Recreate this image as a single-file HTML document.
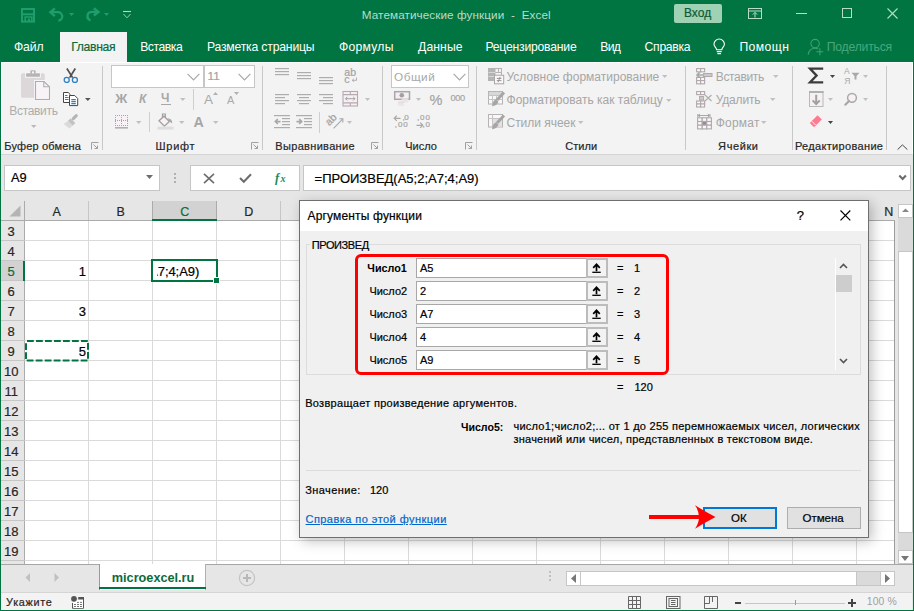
<!DOCTYPE html>
<html><head><meta charset="utf-8">
<style>
*{margin:0;padding:0;box-sizing:border-box}
html,body{width:914px;height:611px;overflow:hidden;background:#e6e6e6;font-family:"Liberation Sans",sans-serif;position:relative}
.a{position:absolute}
.t{position:absolute;white-space:nowrap;line-height:1}
svg{overflow:visible}
</style></head><body>
<div class="a" style="left:0px;top:0px;width:914px;height:62px;background:#007541"></div>
<svg class="a" style="left:21px;top:8px;" width="14" height="14" viewBox="0 0 14 14"><rect x="1" y="1" width="12" height="12.6" fill="none" stroke="#1f9d6c" stroke-width="2"/><rect x="1" y="5.3" width="12" height="2" fill="#1f9d6c"/><path d="M4.2 13.6 V9 H10.8 V13.6" fill="none" stroke="#1f9d6c" stroke-width="1.6"/><rect x="7" y="10.5" width="2" height="3" fill="#1f9d6c"/></svg>
<svg class="a" style="left:49px;top:7px;" width="16" height="15" viewBox="0 0 16 15"><path d="M5.8 1.3 L1.4 5.2 L5.8 9.1" fill="none" stroke="#1f9d6c" stroke-width="2.4"/><path d="M2 5.2 H8.8 A4.2 4.2 0 0 1 9.3 13.6" fill="none" stroke="#1f9d6c" stroke-width="2.3"/></svg>
<svg class="a" style="left:69px;top:13px;" width="6" height="3" viewBox="0 0 6 3"><path d="M0 0 H5.2 L2.6 3 Z" fill="#1f9d6c"/></svg>
<svg class="a" style="left:84px;top:7px;" width="16" height="15" viewBox="0 0 16 15"><path d="M9.8 1.3 L14.4 4.9 L9.8 8.5" fill="none" stroke="#1f9d6c" stroke-width="2.4"/><path d="M14 4.9 H7.5 A4.3 4.3 0 0 0 6.5 13.3" fill="none" stroke="#1f9d6c" stroke-width="2.3"/></svg>
<svg class="a" style="left:104px;top:13px;" width="5" height="3" viewBox="0 0 5 3"><path d="M0 0 H5 L2.5 3 Z" fill="#1f9d6c"/></svg>
<svg class="a" style="left:122px;top:10px;" width="10" height="9" viewBox="0 0 10 9"><path d="M1 1.5 H9" stroke="#b6dcc6" stroke-width="1.1"/><path d="M1.5 4 L5 7.8 L8.5 4" fill="none" stroke="#9ccfb2" stroke-width="1"/></svg>
<div class="t" style="left:361.80px;top:9.00px;font-size:11.7px;color:#b9dcc8;font-weight:normal;letter-spacing:0.095px;">Математические функции&nbsp; -&nbsp; Excel</div>
<div class="a" style="left:674px;top:4px;width:48px;height:19px;background:#9fd2b5;border-radius:2px"></div>
<div class="t" style="left:684.00px;top:7.34px;font-size:12px;color:#0e5a33;font-weight:normal;-webkit-text-stroke:0.2px currentColor;">Вход</div>
<svg class="a" style="left:748px;top:8px;" width="14" height="11" viewBox="0 0 14 11"><rect x="0.5" y="0.5" width="13" height="10" fill="none" stroke="#b9dcc8" stroke-width="1"/><path d="M0.5 3 H13.5" stroke="#b9dcc8"/><path d="M7 9.5 V4.5 M4.8 6.6 L7 4.4 L9.2 6.6" fill="none" stroke="#b9dcc8"/></svg>
<div class="a" style="left:796px;top:13px;width:11px;height:1px;background:#b9dcc8"></div>
<div class="a" style="left:842px;top:8px;width:10px;height:10px;border:1px solid #b9dcc8"></div>
<svg class="a" style="left:887px;top:8px;" width="11" height="11" viewBox="0 0 11 11"><path d="M0.5 0.5 L10.5 10.5 M10.5 0.5 L0.5 10.5" stroke="#b9dcc8" stroke-width="1.1"/></svg>
<div class="a" style="left:60px;top:32px;width:67px;height:31px;background:#f3f3f3"></div>
<div class="t" style="left:13.90px;top:40.67px;font-size:12.2px;color:#fff;font-weight:normal;letter-spacing:-0.122px;">Файл</div>
<div class="t" style="left:71.20px;top:40.67px;font-size:12.2px;color:#0d6b3a;font-weight:normal;letter-spacing:-0.315px;-webkit-text-stroke:0.2px currentColor;">Главная</div>
<div class="t" style="left:140.20px;top:40.67px;font-size:12.2px;color:#fff;font-weight:normal;letter-spacing:-0.467px;">Вставка</div>
<div class="t" style="left:206.90px;top:40.67px;font-size:12.2px;color:#fff;font-weight:normal;letter-spacing:-0.179px;">Разметка страницы</div>
<div class="t" style="left:339.10px;top:40.67px;font-size:12.2px;color:#fff;font-weight:normal;letter-spacing:0.211px;">Формулы</div>
<div class="t" style="left:418.10px;top:40.67px;font-size:12.2px;color:#fff;font-weight:normal;letter-spacing:0.073px;">Данные</div>
<div class="t" style="left:485.40px;top:40.67px;font-size:12.2px;color:#fff;font-weight:normal;letter-spacing:-0.216px;">Рецензирование</div>
<div class="t" style="left:600.20px;top:40.67px;font-size:12.2px;color:#fff;font-weight:normal;letter-spacing:-0.625px;">Вид</div>
<div class="t" style="left:644.60px;top:40.67px;font-size:12.2px;color:#fff;font-weight:normal;letter-spacing:-0.302px;">Справка</div>
<div class="t" style="left:739.40px;top:40.67px;font-size:12.2px;color:#fff;font-weight:normal;letter-spacing:0.429px;">Помощн</div>
<div class="t" style="left:826.70px;top:40.67px;font-size:12.2px;color:#4aa77c;font-weight:normal;letter-spacing:-0.200px;">Поделиться</div>
<svg class="a" style="left:713px;top:39px;" width="13" height="17" viewBox="0 0 13 17"><path d="M3.6 10.8 C3.4 8.6 1 7.6 1 5.2 A5.2 5.2 0 0 1 11.4 5.2 C11.4 7.6 9 8.6 8.8 10.8 Z" fill="none" stroke="#fff" stroke-width="1.1"/><path d="M3.8 12.6 H8.6 M4.4 14.6 H8" stroke="#fff" stroke-width="1.1"/></svg>
<svg class="a" style="left:807px;top:38px;" width="17" height="18" viewBox="0 0 17 18"><circle cx="8.1" cy="5.6" r="4.2" fill="none" stroke="#3f9f72" stroke-width="1.1"/><path d="M1.2 16.6 C1.8 12.4 4.6 10.2 8.1 10.2 C9.4 10.2 10.4 10.5 11.3 11" fill="none" stroke="#3f9f72" stroke-width="1.1"/><path d="M12.9 10.3 V17.3 M9.4 13.8 H16.4" stroke="#3f9f72" stroke-width="1.1"/></svg>
<div class="a" style="left:1px;top:62px;width:912px;height:92px;background:#f3f3f3;border-left:1px solid #fff;border-top:1px solid #fff;border-right:1px solid #fff"></div>
<div class="a" style="left:1px;top:154px;width:911px;height:1px;background:#d5d5d5"></div>
<div class="a" style="left:102px;top:66px;width:1px;height:84px;background:#c8c8c8"></div>
<div class="a" style="left:262px;top:66px;width:1px;height:84px;background:#c8c8c8"></div>
<div class="a" style="left:382px;top:66px;width:1px;height:84px;background:#c8c8c8"></div>
<div class="a" style="left:476px;top:66px;width:1px;height:84px;background:#c8c8c8"></div>
<div class="a" style="left:685px;top:66px;width:1px;height:84px;background:#c8c8c8"></div>
<div class="a" style="left:792px;top:66px;width:1px;height:84px;background:#c8c8c8"></div>
<div class="a" style="left:886px;top:66px;width:1px;height:84px;background:#c8c8c8"></div>
<div class="t" style="left:4.30px;top:141.19px;font-size:11px;color:#262626;font-weight:normal;letter-spacing:0.168px;-webkit-text-stroke:0.2px currentColor;">Буфер обмена</div>
<div class="t" style="left:155.60px;top:141.19px;font-size:11px;color:#262626;font-weight:normal;letter-spacing:0.675px;-webkit-text-stroke:0.2px currentColor;">Шрифт</div>
<div class="t" style="left:275.30px;top:141.19px;font-size:11px;color:#262626;font-weight:normal;letter-spacing:0.325px;-webkit-text-stroke:0.2px currentColor;">Выравнивание</div>
<div class="t" style="left:405.30px;top:141.19px;font-size:11px;color:#262626;font-weight:normal;letter-spacing:-0.011px;-webkit-text-stroke:0.2px currentColor;">Число</div>
<div class="t" style="left:565.20px;top:141.19px;font-size:11px;color:#262626;font-weight:normal;letter-spacing:0.050px;-webkit-text-stroke:0.2px currentColor;">Стили</div>
<div class="t" style="left:718.10px;top:141.19px;font-size:11px;color:#262626;font-weight:normal;letter-spacing:0.599px;-webkit-text-stroke:0.2px currentColor;">Ячейки</div>
<div class="t" style="left:794.90px;top:141.19px;font-size:11px;color:#262626;font-weight:normal;letter-spacing:0.330px;-webkit-text-stroke:0.2px currentColor;">Редактирование</div>
<svg class="a" style="left:91px;top:142px;" width="8" height="8" viewBox="0 0 8 8"><path d="M0.5 7.5 V0.5 H7.5" fill="none" stroke="#a0a0a0"/><path d="M2.5 2.5 L6.5 6.5 M3.5 6.5 H6.5 V3.5" fill="none" stroke="#a0a0a0"/></svg>
<svg class="a" style="left:251px;top:142px;" width="8" height="8" viewBox="0 0 8 8"><path d="M0.5 7.5 V0.5 H7.5" fill="none" stroke="#a0a0a0"/><path d="M2.5 2.5 L6.5 6.5 M3.5 6.5 H6.5 V3.5" fill="none" stroke="#a0a0a0"/></svg>
<svg class="a" style="left:371px;top:142px;" width="8" height="8" viewBox="0 0 8 8"><path d="M0.5 7.5 V0.5 H7.5" fill="none" stroke="#a0a0a0"/><path d="M2.5 2.5 L6.5 6.5 M3.5 6.5 H6.5 V3.5" fill="none" stroke="#a0a0a0"/></svg>
<svg class="a" style="left:465px;top:142px;" width="8" height="8" viewBox="0 0 8 8"><path d="M0.5 7.5 V0.5 H7.5" fill="none" stroke="#a0a0a0"/><path d="M2.5 2.5 L6.5 6.5 M3.5 6.5 H6.5 V3.5" fill="none" stroke="#a0a0a0"/></svg>
<svg class="a" style="left:20px;top:69px;" width="30" height="32" viewBox="0 0 30 32"><rect x="1" y="4.2" width="23.8" height="24.5" rx="1.5" fill="#dcd8da"/><rect x="5.1" y="3.2" width="15.8" height="5.6" fill="#f6f6f6"/><rect x="6.1" y="4.2" width="13.8" height="3.6" rx="0.6" fill="#b8b4b6"/><rect x="10.4" y="1.2" width="5.2" height="3.5" rx="1" fill="#b8b4b6"/><rect x="12" y="2.4" width="2" height="2" fill="#f6f6f6"/><path d="M15.5 12.5 H24 L29.5 17.8 V30.5 H15.5 Z" fill="none" stroke="#f6f6f6" stroke-width="3"/><path d="M15.5 12.5 H24 L29.5 17.8 V30.5 H15.5 Z" fill="#f8f3f6" stroke="#b0acae" stroke-width="1.1"/><path d="M23.8 12.5 V17.8 H29.5" fill="none" stroke="#b0acae" stroke-width="1.1"/></svg>
<div class="t" style="left:9.30px;top:104.74px;font-size:12px;color:#adadad;font-weight:normal;letter-spacing:-0.326px;">Вставить</div>
<svg class="a" style="left:31px;top:125px;" width="6" height="3" viewBox="0 0 6 3"><path d="M0 0 H5.5 L2.75 3 Z" fill="#b9b9b9"/></svg>
<svg class="a" style="left:63px;top:67px;" width="16" height="16" viewBox="0 0 16 16"><path d="M3.9 1.5 L9.6 10.6 M12.3 1.5 L6.6 10.6" stroke="#505050" stroke-width="1.7"/><circle cx="3.7" cy="12.9" r="2.5" fill="none" stroke="#2e7fc1" stroke-width="1.3"/><circle cx="11.9" cy="12.9" r="2.5" fill="none" stroke="#2e7fc1" stroke-width="1.3"/></svg>
<svg class="a" style="left:63px;top:92px;" width="16" height="15" viewBox="0 0 16 15"><path d="M0.5 0.5 H5.2 L7 2.3 V10.5 H0.5 Z" fill="#fff" stroke="#454545"/><path d="M2 3.5 H4.5 M2 5.5 H5.5 M2 7.5 H5.5" stroke="#2e7fc1"/><path d="M6.5 3.5 H11.7 L14.7 6.5 V13.6 H6.5 Z" fill="#fff" stroke="#454545"/><path d="M8.3 7.6 H12.8 M8.3 9.6 H12.8 M8.3 11.6 H12.8" stroke="#2e7fc1" stroke-width="1.1"/></svg>
<svg class="a" style="left:85px;top:98px;" width="6" height="3" viewBox="0 0 6 3"><path d="M0 0 H5.6 L2.8 3 Z" fill="#555"/></svg>
<svg class="a" style="left:63px;top:114px;" width="17" height="15" viewBox="0 0 17 15"><path d="M13.3 1.6 L10.3 4.6" stroke="#b4b4b4" stroke-width="3" stroke-linecap="round"/><path d="M7.6 4.3 L12.3 9 L9.6 11.7 L4.9 7 Z" fill="#c2c2c2"/><path d="M4.9 7 L9.6 11.7 L6.4 14.6 L0.6 10 Z" fill="#dadada"/></svg>
<div class="a" style="left:111px;top:65px;width:93px;height:23px;background:#fff;border:1px solid #c6c6c6"></div>
<div class="a" style="left:204px;top:65px;width:51px;height:23px;background:#fff;border:1px solid #c6c6c6"></div>
<svg class="a" style="left:187px;top:73px;" width="13" height="8" viewBox="0 0 13 8"><path d="M0.6 0.8 L6.5 6.8 L12.4 0.8" fill="none" stroke="#a8a8a8" stroke-width="1.2"/></svg>
<svg class="a" style="left:238px;top:73px;" width="13" height="8" viewBox="0 0 13 8"><path d="M0.6 0.8 L6.5 6.8 L12.4 0.8" fill="none" stroke="#a8a8a8" stroke-width="1.2"/></svg>
<div class="t" style="left:207.50px;top:71.21px;font-size:11.8px;color:#a4a4a4;font-weight:normal;-webkit-text-stroke:0.2px currentColor;">11</div>
<div class="t" style="left:115.30px;top:91.74px;font-size:13.3px;color:#a6a6a6;font-weight:bold;">Ж</div>
<div class="t" style="left:139.00px;top:92.84px;font-size:12px;color:#a8a8a8;font-weight:bold;font-style:italic">К</div>
<div class="t" style="left:161.00px;top:92.34px;font-size:12px;color:#a8a8a8;font-weight:bold;">Ч</div>
<div class="a" style="left:161px;top:104px;width:10px;height:1px;background:#a8a8a8"></div>
<svg class="a" style="left:180px;top:98px;" width="6" height="3" viewBox="0 0 6 3"><path d="M0 0 H5.5 L2.75 3 Z" fill="#c0c0c0"/></svg>
<div class="a" style="left:193px;top:89px;width:1px;height:21px;background:#cfcfcf"></div>
<div class="t" style="left:204.00px;top:93.17px;font-size:13.5px;color:#a8a8a8;font-weight:normal;">A</div>
<svg class="a" style="left:213px;top:92px;" width="5" height="3" viewBox="0 0 5 3"><path d="M0 3 H5 L2.5 0 Z" fill="#b0b0b0"/></svg>
<div class="t" style="left:227.00px;top:95.29px;font-size:11px;color:#a8a8a8;font-weight:normal;">A</div>
<svg class="a" style="left:234px;top:92px;" width="5" height="3" viewBox="0 0 5 3"><path d="M0 0 H5 L2.5 3 Z" fill="#b0b0b0"/></svg>
<svg class="a" style="left:115px;top:115px;" width="14" height="14" viewBox="0 0 14 14"><rect x="0" y="0" width="13" height="11" fill="#f8f2f6"/><rect x="0" y="0" width="1" height="1" fill="#aaa2aa"/><rect x="0" y="5" width="1" height="1" fill="#aaa2aa"/><rect x="0" y="10" width="1" height="1" fill="#aaa2aa"/><rect x="2" y="0" width="1" height="1" fill="#aaa2aa"/><rect x="2" y="5" width="1" height="1" fill="#aaa2aa"/><rect x="2" y="10" width="1" height="1" fill="#aaa2aa"/><rect x="4" y="0" width="1" height="1" fill="#aaa2aa"/><rect x="4" y="5" width="1" height="1" fill="#aaa2aa"/><rect x="4" y="10" width="1" height="1" fill="#aaa2aa"/><rect x="6" y="0" width="1" height="1" fill="#aaa2aa"/><rect x="6" y="5" width="1" height="1" fill="#aaa2aa"/><rect x="6" y="10" width="1" height="1" fill="#aaa2aa"/><rect x="8" y="0" width="1" height="1" fill="#aaa2aa"/><rect x="8" y="5" width="1" height="1" fill="#aaa2aa"/><rect x="8" y="10" width="1" height="1" fill="#aaa2aa"/><rect x="10" y="0" width="1" height="1" fill="#aaa2aa"/><rect x="10" y="5" width="1" height="1" fill="#aaa2aa"/><rect x="10" y="10" width="1" height="1" fill="#aaa2aa"/><rect x="12" y="0" width="1" height="1" fill="#aaa2aa"/><rect x="12" y="5" width="1" height="1" fill="#aaa2aa"/><rect x="12" y="10" width="1" height="1" fill="#aaa2aa"/><rect x="0" y="0" width="1" height="1" fill="#aaa2aa"/><rect x="6" y="0" width="1" height="1" fill="#aaa2aa"/><rect x="12" y="0" width="1" height="1" fill="#aaa2aa"/><rect x="0" y="2" width="1" height="1" fill="#aaa2aa"/><rect x="6" y="2" width="1" height="1" fill="#aaa2aa"/><rect x="12" y="2" width="1" height="1" fill="#aaa2aa"/><rect x="0" y="4" width="1" height="1" fill="#aaa2aa"/><rect x="6" y="4" width="1" height="1" fill="#aaa2aa"/><rect x="12" y="4" width="1" height="1" fill="#aaa2aa"/><rect x="0" y="6" width="1" height="1" fill="#aaa2aa"/><rect x="6" y="6" width="1" height="1" fill="#aaa2aa"/><rect x="12" y="6" width="1" height="1" fill="#aaa2aa"/><rect x="0" y="8" width="1" height="1" fill="#aaa2aa"/><rect x="6" y="8" width="1" height="1" fill="#aaa2aa"/><rect x="12" y="8" width="1" height="1" fill="#aaa2aa"/><rect x="0" y="10" width="1" height="1" fill="#aaa2aa"/><rect x="6" y="10" width="1" height="1" fill="#aaa2aa"/><rect x="12" y="10" width="1" height="1" fill="#aaa2aa"/><rect x="0" y="12" width="13" height="1.6" fill="#b0b0b0"/></svg>
<svg class="a" style="left:136px;top:121px;" width="6" height="3" viewBox="0 0 6 3"><path d="M0 0 H5.5 L2.75 3 Z" fill="#c0c0c0"/></svg>
<div class="a" style="left:149px;top:112px;width:1px;height:20px;background:#cfcfcf"></div>
<svg class="a" style="left:157px;top:113px;" width="17" height="17" viewBox="0 0 17 17"><path d="M2 7.8 L7 3.2 L12.4 8.6 L7.4 13.2 Z" fill="#f8f0f4" stroke="#a0a0a0" stroke-width="1.3"/><path d="M5.5 4.8 V1 H8.3 V4.5" fill="none" stroke="#a0a0a0" stroke-width="1.2"/><path d="M10.5 5.2 Q15.5 5.5 15.2 10.5 L12.6 8.4 Z" fill="#a8a8a8"/><rect x="0.5" y="13.6" width="16" height="3" fill="#dedede"/></svg>
<svg class="a" style="left:179px;top:121px;" width="6" height="3" viewBox="0 0 6 3"><path d="M0 0 H5.5 L2.75 3 Z" fill="#c0c0c0"/></svg>
<div class="t" style="left:193.60px;top:114.80px;font-size:14.3px;color:#a6a6a6;font-weight:bold;">A</div>
<svg class="a" style="left:213px;top:121px;" width="6" height="3" viewBox="0 0 6 3"><path d="M0 0 H5.5 L2.75 3 Z" fill="#c0c0c0"/></svg>
<svg class="a" style="left:0px;top:0px;left:0;top:0" width="914" height="200" viewBox="0 0 914 200"><rect x="275" y="68" width="14" height="1.2" fill="#adadad"/><rect x="275" y="71" width="14" height="1.2" fill="#adadad"/><rect x="275" y="74" width="14" height="1.2" fill="#adadad"/><rect x="297" y="72" width="14" height="1.2" fill="#adadad"/><rect x="297" y="75" width="14" height="1.2" fill="#adadad"/><rect x="297" y="78" width="14" height="1.2" fill="#adadad"/><rect x="319" y="77" width="14" height="1.2" fill="#adadad"/><rect x="319" y="80" width="14" height="1.2" fill="#adadad"/><rect x="319" y="83" width="14" height="1.2" fill="#adadad"/><rect x="275" y="94" width="14" height="1.2" fill="#adadad"/><rect x="297" y="94" width="14" height="1.2" fill="#adadad"/><rect x="319" y="94" width="14" height="1.2" fill="#adadad"/><rect x="275" y="97" width="10" height="1.2" fill="#adadad"/><rect x="299" y="97" width="10" height="1.2" fill="#adadad"/><rect x="323" y="97" width="10" height="1.2" fill="#adadad"/><rect x="275" y="100" width="14" height="1.2" fill="#adadad"/><rect x="297" y="100" width="14" height="1.2" fill="#adadad"/><rect x="319" y="100" width="14" height="1.2" fill="#adadad"/><rect x="275" y="103" width="10" height="1.2" fill="#adadad"/><rect x="299" y="103" width="10" height="1.2" fill="#adadad"/><rect x="323" y="103" width="10" height="1.2" fill="#adadad"/><rect x="274" y="115" width="16" height="1.2" fill="#adadad"/><rect x="296" y="115" width="16" height="1.2" fill="#adadad"/><rect x="282" y="118" width="8" height="1.2" fill="#adadad"/><rect x="304" y="118" width="8" height="1.2" fill="#adadad"/><rect x="282" y="121" width="8" height="1.2" fill="#adadad"/><rect x="304" y="121" width="8" height="1.2" fill="#adadad"/><rect x="282" y="124" width="8" height="1.2" fill="#adadad"/><rect x="304" y="124" width="8" height="1.2" fill="#adadad"/><rect x="274" y="127" width="16" height="1.2" fill="#adadad"/><rect x="296" y="127" width="16" height="1.2" fill="#adadad"/><path d="M280.5 121.6 H275.5 M277.8 119.2 L275.3 121.6 L277.8 124" fill="none" stroke="#a8a8a8" stroke-width="1.6"/><path d="M296.5 121.6 H301.5 M299.2 119.2 L301.7 121.6 L299.2 124" fill="none" stroke="#a8a8a8" stroke-width="1.6"/></svg>
<div class="t" style="left:344.30px;top:67.01px;font-size:10.5px;color:#a2a2a2;font-weight:normal;-webkit-text-stroke:0.2px currentColor;">ab</div>
<div class="t" style="left:344.30px;top:73.91px;font-size:10.5px;color:#a2a2a2;font-weight:normal;-webkit-text-stroke:0.2px currentColor;">c</div>
<svg class="a" style="left:351px;top:77px;" width="7" height="6" viewBox="0 0 7 6"><path d="M5.5 0.5 V3.3 H1.2 M2.8 1.8 L1.2 3.3 L2.8 4.8" fill="none" stroke="#a8a8a8" stroke-width="0.9"/></svg>
<svg class="a" style="left:342px;top:91px;" width="16" height="15" viewBox="0 0 16 15"><rect x="1" y="0.5" width="14.5" height="14.5" fill="#f6eff3" stroke="#b4aab0" stroke-width="1.1"/><path d="M1 3.6 H15.5 M1 11.9 H15.5 M8.3 0.5 V3.6 M8.3 11.9 V15" stroke="#b4aab0" stroke-width="1.1"/><path d="M3.5 7.7 H13 M5.3 5.9 L3.5 7.7 L5.3 9.5 M11.2 5.9 L13 7.7 L11.2 9.5" fill="none" stroke="#a0a0a0" stroke-width="1"/></svg>
<svg class="a" style="left:365px;top:98px;" width="5" height="3" viewBox="0 0 5 3"><path d="M0 0 H5 L2.5 3 Z" fill="#c0c0c0"/></svg>
<div class="a" style="left:319px;top:112px;width:1px;height:21px;background:#cfcfcf"></div>
<svg class="a" style="left:326px;top:113px;" width="19" height="17" viewBox="0 0 19 17"><text x="0" y="0" font-size="10.5" fill="#a4a4a4" stroke="#a4a4a4" stroke-width="0.25" font-family="Liberation Sans" transform="translate(3.2 13.2) rotate(-45)">ab</text><path d="M7.6 15.4 L16.6 6.2" stroke="#a8a8a8" stroke-width="1.1"/><path d="M13.4 5.8 L16.9 5.9 L16.8 9.4" fill="none" stroke="#a8a8a8" stroke-width="1.1"/></svg>
<svg class="a" style="left:347px;top:121px;" width="5" height="3" viewBox="0 0 5 3"><path d="M0 0 H5 L2.5 3 Z" fill="#c0c0c0"/></svg>
<div class="a" style="left:391px;top:65px;width:78px;height:23px;background:#fff;border:1px solid #c6c6c6"></div>
<div class="t" style="left:394.00px;top:72.01px;font-size:11.8px;color:#a8a8a8;font-weight:normal;letter-spacing:0.486px;">Общий</div>
<svg class="a" style="left:453px;top:73px;" width="13" height="8" viewBox="0 0 13 8"><path d="M0.6 0.8 L6.5 6.8 L12.4 0.8" fill="none" stroke="#a8a8a8" stroke-width="1.2"/></svg>
<svg class="a" style="left:393px;top:90px;" width="18" height="17" viewBox="0 0 18 17"><rect x="1.7" y="1.7" width="14.8" height="7.6" fill="#f6eef2" stroke="#a8a8a8" stroke-width="1.5"/><circle cx="8.8" cy="5.3" r="2.3" fill="#a0a0a0"/><ellipse cx="12" cy="9.2" rx="3.6" ry="1.3" fill="#e4dce0"/><ellipse cx="12" cy="11.6" rx="3.6" ry="1.1" fill="#ece4e8"/><ellipse cx="8" cy="12.6" rx="3.4" ry="1.2" fill="#e4dce0"/><ellipse cx="8" cy="15" rx="3.4" ry="1.1" fill="#ece4e8"/></svg>
<svg class="a" style="left:416px;top:98px;" width="5" height="3" viewBox="0 0 5 3"><path d="M0 0 H5 L2.5 3 Z" fill="#c0c0c0"/></svg>
<div class="t" style="left:429.60px;top:92.83px;font-size:14.5px;color:#a4a4a4;font-weight:normal;-webkit-text-stroke:0.2px currentColor;">%</div>
<div class="t" style="left:450.40px;top:94.41px;font-size:9.2px;color:#a4a4a4;font-weight:normal;letter-spacing:-0.250px;-webkit-text-stroke:0.2px currentColor;">000</div>
<svg class="a" style="left:393px;top:115px;" width="8" height="7" viewBox="0 0 8 7"><path d="M7.5 3.3 H1.2 M3.8 0.7 L1.2 3.3 L3.8 5.9" fill="none" stroke="#a8a8a8" stroke-width="1.2"/></svg>
<div class="t" style="left:402.60px;top:113.83px;font-size:8px;color:#a4a4a4;font-weight:normal;letter-spacing:-0.552px;-webkit-text-stroke:0.2px currentColor;">,0</div>
<div class="t" style="left:394.80px;top:121.03px;font-size:8px;color:#a4a4a4;font-weight:normal;letter-spacing:0.899px;-webkit-text-stroke:0.2px currentColor;">,00</div>
<div class="t" style="left:417.00px;top:113.83px;font-size:8px;color:#a4a4a4;font-weight:normal;letter-spacing:0.899px;-webkit-text-stroke:0.2px currentColor;">,00</div>
<svg class="a" style="left:416px;top:122px;" width="8" height="7" viewBox="0 0 8 7"><path d="M0.5 3.3 H6.8 M4.2 0.7 L6.8 3.3 L4.2 5.9" fill="none" stroke="#a8a8a8" stroke-width="1.2"/></svg>
<div class="t" style="left:422.60px;top:121.03px;font-size:8px;color:#a4a4a4;font-weight:normal;letter-spacing:0.748px;-webkit-text-stroke:0.2px currentColor;">,0</div>
<div class="t" style="left:506.50px;top:71.04px;font-size:12px;color:#a6a6a6;font-weight:normal;letter-spacing:0.005px;">Условное форматирование</div>
<svg class="a" style="left:662px;top:75.2px;" width="6" height="3" viewBox="0 0 6 3"><path d="M0 0 H5.5 L2.75 3 Z" fill="#c0c0c0"/></svg>
<div class="t" style="left:506.50px;top:94.34px;font-size:12px;color:#a6a6a6;font-weight:normal;letter-spacing:0.006px;">Форматировать как таблицу</div>
<svg class="a" style="left:666px;top:98.5px;" width="6" height="3" viewBox="0 0 6 3"><path d="M0 0 H5.5 L2.75 3 Z" fill="#c0c0c0"/></svg>
<div class="t" style="left:506.50px;top:116.74px;font-size:12px;color:#a6a6a6;font-weight:normal;letter-spacing:-0.027px;">Стили ячеек</div>
<svg class="a" style="left:578px;top:120.9px;" width="6" height="3" viewBox="0 0 6 3"><path d="M0 0 H5.5 L2.75 3 Z" fill="#c0c0c0"/></svg>
<svg class="a" style="left:488px;top:68px;" width="17" height="16" viewBox="0 0 17 16"><rect x="0.5" y="0.5" width="13" height="12" fill="#f6f2f4" stroke="#b4b4b4"/><rect x="0" y="0" width="7.5" height="13" fill="#b4b4b4"/><path d="M0.5 4.5 H7 M0.5 8.5 H7" stroke="#d6d6d6"/><path d="M7.5 4.5 H13.5 M10.5 0.5 V4.5" stroke="#b4b4b4"/><rect x="6.5" y="7.2" width="9.2" height="8.6" fill="#fbf6f9" stroke="#a8a8a8"/><path d="M8.8 10.4 H13.4 M8.8 12.6 H13.4 M12.2 8.8 L10 14.2" stroke="#8c8c8c" stroke-width="0.9"/></svg>
<svg class="a" style="left:488px;top:91px;" width="17" height="16" viewBox="0 0 17 16"><rect x="0.5" y="0.5" width="14" height="12.5" fill="#fbf6f9" stroke="#b4b4b4"/><path d="M0.5 4.5 H14.5 M0.5 8.5 H14.5 M4.5 0.5 V13 M8.5 0.5 V13" stroke="#c4c4c4"/><rect x="1" y="1" width="13" height="3" fill="#d8d8d8"/><path d="M16 1.5 L9 9" stroke="#a6a6a6" stroke-width="3"/><path d="M8.3 8.2 Q4.5 9 4 15.2 Q8.5 15 10.5 11 Z" fill="#a6a6a6"/></svg>
<svg class="a" style="left:488px;top:114px;" width="17" height="16" viewBox="0 0 17 16"><rect x="0.5" y="0.5" width="14" height="12.5" fill="#fbf6f9" stroke="#b4b4b4"/><path d="M0.5 4.5 H14.5 M4.5 0.5 V13" stroke="#c4c4c4"/><rect x="5" y="5" width="9" height="7.5" fill="#e6e0e4"/><path d="M16 1.5 L9 9" stroke="#a6a6a6" stroke-width="3"/><path d="M8.3 8.2 Q4.5 9 4 15.2 Q8.5 15 10.5 11 Z" fill="#a6a6a6"/></svg>
<div class="t" style="left:715.80px;top:71.04px;font-size:12px;color:#a6a6a6;font-weight:normal;letter-spacing:-0.355px;">Вставить</div>
<svg class="a" style="left:773px;top:75.2px;" width="6" height="3" viewBox="0 0 6 3"><path d="M0 0 H5.5 L2.75 3 Z" fill="#c0c0c0"/></svg>
<div class="t" style="left:715.80px;top:94.04px;font-size:12px;color:#a6a6a6;font-weight:normal;letter-spacing:-0.189px;">Удалить</div>
<svg class="a" style="left:770px;top:98.2px;" width="6" height="3" viewBox="0 0 6 3"><path d="M0 0 H5.5 L2.75 3 Z" fill="#c0c0c0"/></svg>
<div class="t" style="left:715.80px;top:116.54px;font-size:12px;color:#a6a6a6;font-weight:normal;letter-spacing:0.191px;">Формат</div>
<svg class="a" style="left:761px;top:120.7px;" width="6" height="3" viewBox="0 0 6 3"><path d="M0 0 H5.5 L2.75 3 Z" fill="#c0c0c0"/></svg>
<svg class="a" style="left:696px;top:68px;" width="17" height="16" viewBox="0 0 17 16"><rect x="0.6" y="0.6" width="4" height="3.2" fill="#fbf6f9" stroke="#b0a8ac" stroke-width="1.1"/><rect x="4.6" y="0.6" width="4" height="3.2" fill="#fbf6f9" stroke="#b0a8ac" stroke-width="1.1"/><rect x="0.6" y="9.4" width="4" height="3.2" fill="#fbf6f9" stroke="#b0a8ac" stroke-width="1.1"/><rect x="4.6" y="9.4" width="4" height="3.2" fill="#fbf6f9" stroke="#b0a8ac" stroke-width="1.1"/><rect x="0.6" y="12.6" width="4" height="3.2" fill="#fbf6f9" stroke="#b0a8ac" stroke-width="1.1"/><rect x="4.6" y="12.6" width="4" height="3.2" fill="#fbf6f9" stroke="#b0a8ac" stroke-width="1.1"/><rect x="7.6" y="5.5" width="8.4" height="3" fill="#d0c8cc" stroke="#b0a8ac"/><path d="M7 7 H1 M3.6 4.4 L1 7 L3.6 9.6" fill="none" stroke="#a8a8a8" stroke-width="1.6"/></svg>
<svg class="a" style="left:696px;top:91px;" width="17" height="17" viewBox="0 0 17 17"><rect x="0.6" y="0.6" width="4" height="3" fill="#fbf6f9" stroke="#b0a8ac" stroke-width="1.1"/><rect x="4.6" y="0.6" width="4" height="3" fill="#fbf6f9" stroke="#b0a8ac" stroke-width="1.1"/><rect x="0.6" y="10" width="4" height="3" fill="#fbf6f9" stroke="#b0a8ac" stroke-width="1.1"/><rect x="4.6" y="10" width="4" height="3" fill="#fbf6f9" stroke="#b0a8ac" stroke-width="1.1"/><rect x="0.6" y="13" width="4" height="3" fill="#fbf6f9" stroke="#b0a8ac" stroke-width="1.1"/><rect x="4.6" y="13" width="4" height="3" fill="#fbf6f9" stroke="#b0a8ac" stroke-width="1.1"/><rect x="3.6" y="5.5" width="4" height="3.6" fill="#d0c8cc" stroke="#b0a8ac"/><path d="M9 4 L15.5 10 M15.5 4 L9 10" stroke="#b0b0b0" stroke-width="1.3"/></svg>
<svg class="a" style="left:697px;top:114px;" width="15" height="16" viewBox="0 0 15 16"><path d="M0.8 0 V3 M13 0 V3 M1 1.5 H12.8 M3 0 L1 1.5 L3 3 M10.8 0 L12.8 1.5 L10.8 3" fill="none" stroke="#a8a8a8" stroke-width="1"/><rect x="0.6" y="3.8" width="4.6" height="3.7" fill="#fbf6f9" stroke="#b0a8ac" stroke-width="1.1"/><rect x="0.6" y="7.5" width="4.6" height="3.7" fill="#fbf6f9" stroke="#b0a8ac" stroke-width="1.1"/><rect x="0.6" y="11.2" width="4.6" height="3.7" fill="#fbf6f9" stroke="#b0a8ac" stroke-width="1.1"/><rect x="5.199999999999999" y="3.8" width="4.6" height="3.7" fill="#fbf6f9" stroke="#b0a8ac" stroke-width="1.1"/><rect x="5.199999999999999" y="7.5" width="4.6" height="3.7" fill="#909090" stroke="#b0a8ac" stroke-width="1.1"/><rect x="5.199999999999999" y="11.2" width="4.6" height="3.7" fill="#fbf6f9" stroke="#b0a8ac" stroke-width="1.1"/><rect x="9.799999999999999" y="3.8" width="4.6" height="3.7" fill="#fbf6f9" stroke="#b0a8ac" stroke-width="1.1"/><rect x="9.799999999999999" y="7.5" width="4.6" height="3.7" fill="#fbf6f9" stroke="#b0a8ac" stroke-width="1.1"/><rect x="9.799999999999999" y="11.2" width="4.6" height="3.7" fill="#fbf6f9" stroke="#b0a8ac" stroke-width="1.1"/></svg>
<svg class="a" style="left:807px;top:66px;" width="18" height="18" viewBox="0 0 18 18"><path d="M16.2 2.6 H3 L9.6 9.6 L3 16.4 H16.2" fill="none" stroke="#3c3c3c" stroke-width="2.3" stroke-linejoin="miter"/></svg>
<svg class="a" style="left:830px;top:75px;" width="5" height="3" viewBox="0 0 5 3"><path d="M0 0 H5 L2.5 3 Z" fill="#444"/></svg>
<div class="t" style="left:844.00px;top:67.30px;font-size:8.5px;color:#a8a8a8;font-weight:normal;">А</div>
<div class="t" style="left:844.30px;top:76.60px;font-size:8.5px;color:#a8a8a8;font-weight:normal;">Я</div>
<svg class="a" style="left:851px;top:72px;" width="9" height="8" viewBox="0 0 9 8"><path d="M0.5 0.8 H8.5 L5.5 4 V7.6 H3.5 V4 Z" fill="#a8a8a8"/></svg>
<svg class="a" style="left:863px;top:75px;" width="5" height="3" viewBox="0 0 5 3"><path d="M0 0 H5 L2.5 3 Z" fill="#c0c0c0"/></svg>
<svg class="a" style="left:809px;top:91px;" width="15" height="16" viewBox="0 0 15 16"><rect x="0.5" y="0.5" width="13.5" height="15" fill="#f6f0f4" stroke="#b8b8b8"/><rect x="0" y="0" width="14.5" height="2" fill="#b0b0b0"/><path d="M7.2 3.8 V13 M3.6 9.4 L7.2 13 L10.8 9.4" fill="none" stroke="#a0a0a0" stroke-width="2"/></svg>
<svg class="a" style="left:828px;top:98px;" width="5" height="3" viewBox="0 0 5 3"><path d="M0 0 H5 L2.5 3 Z" fill="#c0c0c0"/></svg>
<svg class="a" style="left:844px;top:92px;" width="14" height="14" viewBox="0 0 14 14"><circle cx="8" cy="5.8" r="4.4" fill="#f8f0f4" stroke="#a8a8a8" stroke-width="1.5"/><path d="M5 9 L1.3 12.7" stroke="#a8a8a8" stroke-width="2.2" stroke-linecap="round"/></svg>
<svg class="a" style="left:863px;top:98px;" width="5" height="3" viewBox="0 0 5 3"><path d="M0 0 H5 L2.5 3 Z" fill="#c0c0c0"/></svg>
<svg class="a" style="left:809px;top:114px;" width="14" height="14" viewBox="0 0 14 14"><path d="M8.6 1.2 L12.8 5.4 L6.2 12 L2 7.8 Z" fill="#ff7a90"/><path d="M0.8 9 L3.4 6.4 L7.6 10.6 L5 13.2 Z" fill="#ff7a90"/><path d="M2.7 7.1 L6.9 11.3" stroke="#fff" stroke-width="0.9"/></svg>
<svg class="a" style="left:828px;top:121px;" width="5" height="3" viewBox="0 0 5 3"><path d="M0 0 H5 L2.5 3 Z" fill="#444"/></svg>
<svg class="a" style="left:897px;top:144px;" width="11" height="7" viewBox="0 0 11 7"><path d="M0.6 5.6 L5.4 0.9 L10.4 5.6" fill="none" stroke="#444" stroke-width="1"/></svg>
<div class="a" style="left:1px;top:155px;width:911px;height:46px;background:#e6e6e6"></div>
<div class="a" style="left:4px;top:165px;width:156px;height:26px;background:#fff;border:1px solid #c6c6c6"></div>
<div class="t" style="left:11.00px;top:171.96px;font-size:12.8px;color:#000;font-weight:normal;-webkit-text-stroke:0.2px currentColor;">A9</div>
<svg class="a" style="left:146px;top:175px;" width="7" height="4" viewBox="0 0 7 4"><path d="M0 0 H7 L3.5 4 Z" fill="#6d6d6d"/></svg>
<div class="a" style="left:174px;top:173px;width:2px;height:2px;background:#b0b0b0"></div>
<div class="a" style="left:174px;top:177px;width:2px;height:2px;background:#b0b0b0"></div>
<div class="a" style="left:174px;top:181px;width:2px;height:2px;background:#b0b0b0"></div>
<div class="a" style="left:190px;top:165px;width:110px;height:26px;background:#fff;border:1px solid #c6c6c6"></div>
<svg class="a" style="left:203px;top:173px;" width="12" height="11" viewBox="0 0 12 11"><path d="M1 0.8 L11 10.2 M11 0.8 L1 10.2" stroke="#6d6d6d" stroke-width="1.6"/></svg>
<svg class="a" style="left:239px;top:173px;" width="13" height="10" viewBox="0 0 13 10"><path d="M1 5 L4.8 8.8 L12 1.2" fill="none" stroke="#6d6d6d" stroke-width="2"/></svg>
<div class="t" style="left:275.00px;top:171.92px;font-size:12.5px;color:#1d8a55;font-weight:bold;font-style:italic;font-family:'Liberation Serif',serif">f</div>
<div class="t" style="left:280.50px;top:174.03px;font-size:10px;color:#1d8a55;font-weight:bold;font-style:italic;font-family:'Liberation Serif',serif">x</div>
<div class="a" style="left:303px;top:165px;width:608px;height:26px;background:#fff;border:1px solid #c6c6c6"></div>
<div class="t" style="left:314.60px;top:172.00px;font-size:13px;color:#000;font-weight:normal;-webkit-text-stroke:0.2px currentColor;">=ПРОИЗВЕД(A5;2;A7;4;A9)</div>
<svg class="a" style="left:898px;top:174px;" width="10" height="7" viewBox="0 0 10 7"><path d="M1.3 1.6 L4.6 4.9 L7.9 1.6" fill="none" stroke="#6a6a6a" stroke-width="2.1"/></svg>
<div class="a" style="left:1px;top:201px;width:894px;height:363px;#fff;background:#fff"></div>
<div class="a" style="left:1px;top:201px;width:894px;height:20px;background:#e6e6e6"></div>
<div class="a" style="left:1px;top:220px;width:894px;height:1px;background:#ababab"></div>
<svg class="a" style="left:9px;top:205px;" width="12" height="12" viewBox="0 0 12 12"><path d="M11.5 0.5 V11.5 H0.5 Z" fill="#b4b4b4"/></svg>
<div class="a" style="left:1px;top:221px;width:24px;height:343px;background:#e6e6e6"></div>
<div class="a" style="left:24px;top:201px;width:1px;height:363px;background:#ababab"></div>
<div class="a" style="left:88px;top:221px;width:1px;height:343px;background:#dadada"></div>
<div class="a" style="left:88px;top:201px;width:1px;height:19px;background:#c6c6c6"></div>
<div class="a" style="left:152px;top:221px;width:1px;height:343px;background:#dadada"></div>
<div class="a" style="left:152px;top:201px;width:1px;height:19px;background:#c6c6c6"></div>
<div class="a" style="left:216px;top:221px;width:1px;height:343px;background:#dadada"></div>
<div class="a" style="left:216px;top:201px;width:1px;height:19px;background:#c6c6c6"></div>
<div class="a" style="left:280px;top:221px;width:1px;height:343px;background:#dadada"></div>
<div class="a" style="left:280px;top:201px;width:1px;height:19px;background:#c6c6c6"></div>
<div class="a" style="left:344px;top:221px;width:1px;height:343px;background:#dadada"></div>
<div class="a" style="left:344px;top:201px;width:1px;height:19px;background:#c6c6c6"></div>
<div class="a" style="left:408px;top:221px;width:1px;height:343px;background:#dadada"></div>
<div class="a" style="left:408px;top:201px;width:1px;height:19px;background:#c6c6c6"></div>
<div class="a" style="left:472px;top:221px;width:1px;height:343px;background:#dadada"></div>
<div class="a" style="left:472px;top:201px;width:1px;height:19px;background:#c6c6c6"></div>
<div class="a" style="left:536px;top:221px;width:1px;height:343px;background:#dadada"></div>
<div class="a" style="left:536px;top:201px;width:1px;height:19px;background:#c6c6c6"></div>
<div class="a" style="left:600px;top:221px;width:1px;height:343px;background:#dadada"></div>
<div class="a" style="left:600px;top:201px;width:1px;height:19px;background:#c6c6c6"></div>
<div class="a" style="left:664px;top:221px;width:1px;height:343px;background:#dadada"></div>
<div class="a" style="left:664px;top:201px;width:1px;height:19px;background:#c6c6c6"></div>
<div class="a" style="left:728px;top:221px;width:1px;height:343px;background:#dadada"></div>
<div class="a" style="left:728px;top:201px;width:1px;height:19px;background:#c6c6c6"></div>
<div class="a" style="left:792px;top:221px;width:1px;height:343px;background:#dadada"></div>
<div class="a" style="left:792px;top:201px;width:1px;height:19px;background:#c6c6c6"></div>
<div class="a" style="left:856px;top:221px;width:1px;height:343px;background:#dadada"></div>
<div class="a" style="left:856px;top:201px;width:1px;height:19px;background:#c6c6c6"></div>
<div class="a" style="left:25px;top:240px;width:870px;height:1px;background:#dadada"></div>
<div class="a" style="left:1px;top:240px;width:24px;height:1px;background:#c6c6c6"></div>
<div class="a" style="left:25px;top:260px;width:870px;height:1px;background:#dadada"></div>
<div class="a" style="left:1px;top:260px;width:24px;height:1px;background:#c6c6c6"></div>
<div class="a" style="left:25px;top:280px;width:870px;height:1px;background:#dadada"></div>
<div class="a" style="left:1px;top:280px;width:24px;height:1px;background:#c6c6c6"></div>
<div class="a" style="left:25px;top:300px;width:870px;height:1px;background:#dadada"></div>
<div class="a" style="left:1px;top:300px;width:24px;height:1px;background:#c6c6c6"></div>
<div class="a" style="left:25px;top:320px;width:870px;height:1px;background:#dadada"></div>
<div class="a" style="left:1px;top:320px;width:24px;height:1px;background:#c6c6c6"></div>
<div class="a" style="left:25px;top:340px;width:870px;height:1px;background:#dadada"></div>
<div class="a" style="left:1px;top:340px;width:24px;height:1px;background:#c6c6c6"></div>
<div class="a" style="left:25px;top:360px;width:870px;height:1px;background:#dadada"></div>
<div class="a" style="left:1px;top:360px;width:24px;height:1px;background:#c6c6c6"></div>
<div class="a" style="left:25px;top:380px;width:870px;height:1px;background:#dadada"></div>
<div class="a" style="left:1px;top:380px;width:24px;height:1px;background:#c6c6c6"></div>
<div class="a" style="left:25px;top:400px;width:870px;height:1px;background:#dadada"></div>
<div class="a" style="left:1px;top:400px;width:24px;height:1px;background:#c6c6c6"></div>
<div class="a" style="left:25px;top:420px;width:870px;height:1px;background:#dadada"></div>
<div class="a" style="left:1px;top:420px;width:24px;height:1px;background:#c6c6c6"></div>
<div class="a" style="left:25px;top:440px;width:870px;height:1px;background:#dadada"></div>
<div class="a" style="left:1px;top:440px;width:24px;height:1px;background:#c6c6c6"></div>
<div class="a" style="left:25px;top:460px;width:870px;height:1px;background:#dadada"></div>
<div class="a" style="left:1px;top:460px;width:24px;height:1px;background:#c6c6c6"></div>
<div class="a" style="left:25px;top:480px;width:870px;height:1px;background:#dadada"></div>
<div class="a" style="left:1px;top:480px;width:24px;height:1px;background:#c6c6c6"></div>
<div class="a" style="left:25px;top:500px;width:870px;height:1px;background:#dadada"></div>
<div class="a" style="left:1px;top:500px;width:24px;height:1px;background:#c6c6c6"></div>
<div class="a" style="left:25px;top:520px;width:870px;height:1px;background:#dadada"></div>
<div class="a" style="left:1px;top:520px;width:24px;height:1px;background:#c6c6c6"></div>
<div class="a" style="left:25px;top:540px;width:870px;height:1px;background:#dadada"></div>
<div class="a" style="left:1px;top:540px;width:24px;height:1px;background:#c6c6c6"></div>
<div class="a" style="left:25px;top:560px;width:870px;height:1px;background:#dadada"></div>
<div class="a" style="left:1px;top:560px;width:24px;height:1px;background:#c6c6c6"></div>
<div class="a" style="left:152px;top:201px;width:65px;height:20px;background:#d2d2d2"></div>
<div class="a" style="left:152px;top:201px;width:1px;height:20px;background:#ababab"></div>
<div class="a" style="left:216px;top:201px;width:1px;height:20px;background:#ababab"></div>
<div class="a" style="left:152px;top:219px;width:65px;height:2px;background:#007541"></div>
<div class="a" style="left:1px;top:261px;width:24px;height:19px;background:#d2d2d2"></div>
<div class="a" style="left:23px;top:261px;width:2px;height:20px;background:#007541"></div>
<div class="t" style="left:36.7px;width:40px;text-align:center;top:206.42px;font-size:12.5px;color:#262626;-webkit-text-stroke:0.2px currentColor">A</div>
<div class="t" style="left:100.7px;width:40px;text-align:center;top:206.42px;font-size:12.5px;color:#262626;-webkit-text-stroke:0.2px currentColor">B</div>
<div class="t" style="left:164.7px;width:40px;text-align:center;top:206.42px;font-size:12.5px;color:#0d6b3a;-webkit-text-stroke:0.2px currentColor">C</div>
<div class="t" style="left:228.7px;width:40px;text-align:center;top:206.42px;font-size:12.5px;color:#262626;-webkit-text-stroke:0.2px currentColor">D</div>
<div class="t" style="left:292.7px;width:40px;text-align:center;top:206.42px;font-size:12.5px;color:#262626;-webkit-text-stroke:0.2px currentColor">E</div>
<div class="t" style="left:356.7px;width:40px;text-align:center;top:206.42px;font-size:12.5px;color:#262626;-webkit-text-stroke:0.2px currentColor">F</div>
<div class="t" style="left:420.7px;width:40px;text-align:center;top:206.42px;font-size:12.5px;color:#262626;-webkit-text-stroke:0.2px currentColor">G</div>
<div class="t" style="left:484.7px;width:40px;text-align:center;top:206.42px;font-size:12.5px;color:#262626;-webkit-text-stroke:0.2px currentColor">H</div>
<div class="t" style="left:548.7px;width:40px;text-align:center;top:206.42px;font-size:12.5px;color:#262626;-webkit-text-stroke:0.2px currentColor">I</div>
<div class="t" style="left:612.7px;width:40px;text-align:center;top:206.42px;font-size:12.5px;color:#262626;-webkit-text-stroke:0.2px currentColor">J</div>
<div class="t" style="left:676.7px;width:40px;text-align:center;top:206.42px;font-size:12.5px;color:#262626;-webkit-text-stroke:0.2px currentColor">K</div>
<div class="t" style="left:740.7px;width:40px;text-align:center;top:206.42px;font-size:12.5px;color:#262626;-webkit-text-stroke:0.2px currentColor">L</div>
<div class="t" style="left:804.7px;width:40px;text-align:center;top:206.42px;font-size:12.5px;color:#262626;-webkit-text-stroke:0.2px currentColor">M</div>
<div class="t" style="left:868.7px;width:40px;text-align:center;top:206.42px;font-size:12.5px;color:#262626;-webkit-text-stroke:0.2px currentColor">N</div>
<div class="t" style="left:-0.3px;width:23px;text-align:center;top:224.60px;font-size:13px;color:#262626;-webkit-text-stroke:0.2px currentColor">3</div>
<div class="t" style="left:-0.3px;width:23px;text-align:center;top:244.60px;font-size:13px;color:#262626;-webkit-text-stroke:0.2px currentColor">4</div>
<div class="t" style="left:-0.3px;width:23px;text-align:center;top:264.60px;font-size:13px;color:#0d6b3a;-webkit-text-stroke:0.2px currentColor">5</div>
<div class="t" style="left:-0.3px;width:23px;text-align:center;top:284.60px;font-size:13px;color:#262626;-webkit-text-stroke:0.2px currentColor">6</div>
<div class="t" style="left:-0.3px;width:23px;text-align:center;top:304.60px;font-size:13px;color:#262626;-webkit-text-stroke:0.2px currentColor">7</div>
<div class="t" style="left:-0.3px;width:23px;text-align:center;top:324.60px;font-size:13px;color:#262626;-webkit-text-stroke:0.2px currentColor">8</div>
<div class="t" style="left:-0.3px;width:23px;text-align:center;top:344.60px;font-size:13px;color:#262626;-webkit-text-stroke:0.2px currentColor">9</div>
<div class="t" style="left:-0.3px;width:23px;text-align:center;top:364.60px;font-size:13px;color:#262626;-webkit-text-stroke:0.2px currentColor">10</div>
<div class="t" style="left:-0.3px;width:23px;text-align:center;top:384.60px;font-size:13px;color:#262626;-webkit-text-stroke:0.2px currentColor">11</div>
<div class="t" style="left:-0.3px;width:23px;text-align:center;top:404.60px;font-size:13px;color:#262626;-webkit-text-stroke:0.2px currentColor">12</div>
<div class="t" style="left:-0.3px;width:23px;text-align:center;top:424.60px;font-size:13px;color:#262626;-webkit-text-stroke:0.2px currentColor">13</div>
<div class="t" style="left:-0.3px;width:23px;text-align:center;top:444.60px;font-size:13px;color:#262626;-webkit-text-stroke:0.2px currentColor">14</div>
<div class="t" style="left:-0.3px;width:23px;text-align:center;top:464.60px;font-size:13px;color:#262626;-webkit-text-stroke:0.2px currentColor">15</div>
<div class="t" style="left:-0.3px;width:23px;text-align:center;top:484.60px;font-size:13px;color:#262626;-webkit-text-stroke:0.2px currentColor">16</div>
<div class="t" style="left:-0.3px;width:23px;text-align:center;top:504.60px;font-size:13px;color:#262626;-webkit-text-stroke:0.2px currentColor">17</div>
<div class="t" style="left:-0.3px;width:23px;text-align:center;top:524.60px;font-size:13px;color:#262626;-webkit-text-stroke:0.2px currentColor">18</div>
<div class="t" style="left:-0.3px;width:23px;text-align:center;top:544.60px;font-size:13px;color:#262626;-webkit-text-stroke:0.2px currentColor">19</div>
<div class="t" style="left:-0.3px;width:23px;text-align:center;top:564.60px;font-size:13px;color:#262626;-webkit-text-stroke:0.2px currentColor">20</div>
<div class="t" style="left:40px;width:46px;text-align:right;top:264.60px;font-size:13px;color:#000;-webkit-text-stroke:0.2px currentColor">1</div>
<div class="t" style="left:40px;width:46px;text-align:right;top:304.60px;font-size:13px;color:#000;-webkit-text-stroke:0.2px currentColor">3</div>
<div class="t" style="left:40px;width:46px;text-align:right;top:344.60px;font-size:13px;color:#000;-webkit-text-stroke:0.2px currentColor">5</div>
<div class="a" style="left:156.5px;top:262px;width:60px;height:18px;overflow:hidden">
<div class="t" style="left:-7.40px;top:3.00px;font-size:13px;color:#000;font-weight:normal;letter-spacing:-0.059px;-webkit-text-stroke:0.2px currentColor;">A7;4;A9)</div>
</div>
<div class="a" style="left:151px;top:259px;width:67px;height:23px;border:2px solid #007541"></div>
<div class="a" style="left:213px;top:277px;width:7px;height:7px;background:#fff"></div>
<div class="a" style="left:214px;top:278px;width:5px;height:5px;background:#007541"></div>
<svg class="a" style="left:24px;top:340px;" width="66" height="22" viewBox="0 0 66 22"><rect x="2" y="1" width="62" height="19.5" fill="none" stroke="#007541" stroke-width="2" stroke-dasharray="6.8 2.2" stroke-dashoffset="8"/></svg>
<div class="a" style="left:895px;top:201px;width:17px;height:363px;background:#e6e6e6"></div>
<div class="a" style="left:894px;top:221px;width:1px;height:343px;background:#9c9c9c"></div>
<div class="a" style="left:898px;top:204px;width:15px;height:14px;background:#fff;border:1px solid #c6c6c6"></div>
<svg class="a" style="left:902px;top:208px;" width="8" height="5" viewBox="0 0 8 5"><path d="M0 4 H7 L3.5 0.5 Z" fill="#888"/></svg>
<div class="a" style="left:898px;top:218px;width:15px;height:333px;background:#dadada"></div>
<div class="a" style="left:898px;top:251px;width:15px;height:282px;background:#fff;border:1px solid #c6c6c6"></div>
<div class="a" style="left:898px;top:550px;width:15px;height:14px;background:#fff;border:1px solid #c6c6c6"></div>
<svg class="a" style="left:901px;top:556px;" width="8" height="5" viewBox="0 0 8 5"><path d="M0 0 H8 L4 5 Z" fill="#777"/></svg>
<div class="a" style="left:1px;top:564px;width:911px;height:28px;background:#e6e6e6"></div>
<div class="a" style="left:1px;top:564px;width:912px;height:1px;background:#a6a6a6"></div>
<svg class="a" style="left:25px;top:573px;" width="6" height="9" viewBox="0 0 6 9"><path d="M5 0 V9 L0.5 4.5 Z" fill="#c0c0c0"/></svg>
<svg class="a" style="left:54px;top:573px;" width="6" height="9" viewBox="0 0 6 9"><path d="M0.5 0 V9 L5 4.5 Z" fill="#c0c0c0"/></svg>
<div class="a" style="left:99px;top:564px;width:107px;height:26px;background:#fff;border-left:1px solid #9a9a9a;border-right:1px solid #b0b0b0"></div>
<div class="a" style="left:99px;top:587px;width:107px;height:2px;background:#007541"></div>
<div class="t" style="left:111.80px;top:572.25px;font-size:12.7px;color:#0d6b3a;font-weight:bold;">microexcel.ru</div>
<svg class="a" style="left:239px;top:570px;" width="17" height="17" viewBox="0 0 17 17"><circle cx="8" cy="8" r="7.6" fill="none" stroke="#c4c4c4" stroke-width="1.2"/><path d="M8 4 V12 M4 8 H12" stroke="#b8b8b8" stroke-width="2"/></svg>
<div class="a" style="left:549px;top:571px;width:2px;height:2px;background:#c0c0c0"></div>
<div class="a" style="left:549px;top:575px;width:2px;height:2px;background:#c0c0c0"></div>
<div class="a" style="left:549px;top:579px;width:2px;height:2px;background:#c0c0c0"></div>
<div class="a" style="left:566px;top:571px;width:329px;height:15px;background:#dadada;border:1px solid #c6c6c6"></div>
<div class="a" style="left:566px;top:571px;width:15px;height:15px;background:#fff;border:1px solid #c6c6c6"></div>
<svg class="a" style="left:571px;top:574px;" width="5" height="9" viewBox="0 0 5 9"><path d="M5 0 V9 L0 4.5 Z" fill="#777"/></svg>
<div class="a" style="left:580px;top:571px;width:277px;height:15px;background:#fff;border:1px solid #c6c6c6"></div>
<div class="a" style="left:880px;top:571px;width:15px;height:15px;background:#fff;border:1px solid #c6c6c6"></div>
<svg class="a" style="left:885px;top:574px;" width="5" height="9" viewBox="0 0 5 9"><path d="M0 0 V9 L5 4.5 Z" fill="#777"/></svg>
<div class="a" style="left:1px;top:592px;width:911px;height:18px;background:#f3f3f3"></div>
<div class="a" style="left:1px;top:592px;width:911px;height:1px;background:#d5d5d5"></div>
<div class="t" style="left:6.10px;top:597.06px;font-size:10.8px;color:#262626;font-weight:normal;letter-spacing:0.692px;-webkit-text-stroke:0.2px currentColor;">Укажите</div>
<svg class="a" style="left:71px;top:596px;" width="14" height="14" viewBox="0 0 14 14"><path d="M1.5 7 V12.3 H12.5 V1" fill="#fff" stroke="#555"/><rect x="3" y="4" width="9" height="8" fill="#fff"/><circle cx="3" cy="2.8" r="2.9" fill="#555"/><rect x="7.2" y="1" width="5.8" height="2.5" fill="#555"/><path d="M6.2 6.4 H7.8 M9.2 6.4 H10.8 M3.2 8.5 H4.8 M6.2 8.5 H7.8 M9.2 8.5 H10.8 M3.2 10.5 H4.8 M6.2 10.5 H7.8 M9.2 10.5 H10.8" stroke="#555" stroke-width="1"/></svg>
<svg class="a" style="left:628px;top:596px;" width="13" height="13" viewBox="0 0 13 13"><path d="M0.5 0.5 H12.5 V12.5 H0.5 Z M0.5 4.5 H12.5 M0.5 8.5 H12.5 M4.5 0.5 V12.5 M8.5 0.5 V12.5" fill="none" stroke="#666"/></svg>
<svg class="a" style="left:666px;top:596px;" width="15" height="13" viewBox="0 0 15 13"><rect x="0.5" y="0.5" width="13.5" height="12" fill="none" stroke="#666"/><rect x="3" y="2.5" width="8.5" height="8" fill="none" stroke="#666"/><path d="M5 4.5 H9.5 M5 6.5 H9.5 M5 8.5 H9.5" stroke="#666"/></svg>
<svg class="a" style="left:704px;top:596px;" width="14" height="13" viewBox="0 0 14 13"><path d="M0.5 12.5 V0.5 H13.5 V12.5 H0.5 M5.5 0.5 V7.5 H0.5 M8.5 0.5 V6" fill="none" stroke="#666"/></svg>
<div class="a" style="left:735px;top:602px;width:6px;height:2px;background:#444"></div>
<div class="a" style="left:745px;top:603px;width:100px;height:1px;background:#c6c6c6"></div>
<div class="a" style="left:795px;top:600px;width:1px;height:5px;background:#999"></div>
<svg class="a" style="left:848px;top:599px;" width="8" height="8" viewBox="0 0 8 8"><path d="M4 0 V8 M0 4 H8" stroke="#444" stroke-width="2"/></svg>
<div class="t" style="left:866.70px;top:597.00px;font-size:10.4px;color:#a0a0a0;font-weight:normal;letter-spacing:0.168px;">100 %</div>
<div class="a" style="left:299px;top:200px;width:570px;height:338px;background:#f0f0f0;border:1px solid #6f6f6f;box-shadow:3px 3px 12px rgba(0,0,0,0.25)"></div>
<div class="a" style="left:300px;top:201px;width:568px;height:30px;background:#fff"></div>
<div class="t" style="left:307.50px;top:210.24px;font-size:12px;color:#000;font-weight:normal;letter-spacing:0.160px;-webkit-text-stroke:0.2px currentColor;">Аргументы функции</div>
<div class="t" style="left:796.80px;top:209.00px;font-size:13px;color:#000;font-weight:normal;-webkit-text-stroke:0.2px currentColor;">?</div>
<svg class="a" style="left:840px;top:210px;" width="11" height="11" viewBox="0 0 11 11"><path d="M0.5 0.5 L10.3 10.3 M10.3 0.5 L0.5 10.3" stroke="#000" stroke-width="1.15"/></svg>
<div class="a" style="left:306px;top:244px;width:555px;height:131px;border:1px solid #dcdcdc"></div>
<div class="a" style="left:310px;top:238px;width:59px;height:10px;background:#f0f0f0"></div>
<div class="t" style="left:311.70px;top:240.19px;font-size:11px;color:#000;font-weight:normal;letter-spacing:-0.392px;-webkit-text-stroke:0.2px currentColor;">ПРОИЗВЕД</div>
<div class="t" style="left:367.30px;top:262.86px;font-size:10.8px;color:#000;font-weight:bold;">Число1</div>
<div class="a" style="left:416px;top:258px;width:192px;height:20px;background:#fff;border:1px solid #a8a8a8"></div>
<div class="t" style="left:420.00px;top:262.69px;font-size:11px;color:#000;font-weight:normal;-webkit-text-stroke:0.2px currentColor;">A5</div>
<div class="a" style="left:586px;top:258px;width:22px;height:20px;background:#f3f3f3;border:2px solid #bcbcbc"></div>
<svg class="a" style="left:591px;top:262px;" width="11" height="11" viewBox="0 0 11 11"><path d="M5.5 9.2 V2.6 M2.2 5.8 L5.5 2.3 L8.8 5.8" fill="none" stroke="#000" stroke-width="1.7"/><path d="M1.3 10.3 H9.7" stroke="#000" stroke-width="1.3"/></svg>
<div class="t" style="left:617.00px;top:262.69px;font-size:11px;color:#000;font-weight:normal;-webkit-text-stroke:0.2px currentColor;">=</div>
<div class="t" style="left:634.00px;top:262.69px;font-size:11px;color:#000;font-weight:normal;-webkit-text-stroke:0.2px currentColor;">1</div>
<div class="t" style="left:369.40px;top:285.69px;font-size:11px;color:#000;font-weight:normal;-webkit-text-stroke:0.2px currentColor;">Число2</div>
<div class="a" style="left:416px;top:281px;width:192px;height:20px;background:#fff;border:1px solid #a8a8a8"></div>
<div class="t" style="left:420.00px;top:285.69px;font-size:11px;color:#000;font-weight:normal;-webkit-text-stroke:0.2px currentColor;">2</div>
<div class="a" style="left:586px;top:281px;width:22px;height:20px;background:#f3f3f3;border:2px solid #bcbcbc"></div>
<svg class="a" style="left:591px;top:285px;" width="11" height="11" viewBox="0 0 11 11"><path d="M5.5 9.2 V2.6 M2.2 5.8 L5.5 2.3 L8.8 5.8" fill="none" stroke="#000" stroke-width="1.7"/><path d="M1.3 10.3 H9.7" stroke="#000" stroke-width="1.3"/></svg>
<div class="t" style="left:617.00px;top:285.69px;font-size:11px;color:#000;font-weight:normal;-webkit-text-stroke:0.2px currentColor;">=</div>
<div class="t" style="left:634.00px;top:285.69px;font-size:11px;color:#000;font-weight:normal;-webkit-text-stroke:0.2px currentColor;">2</div>
<div class="t" style="left:369.40px;top:308.69px;font-size:11px;color:#000;font-weight:normal;-webkit-text-stroke:0.2px currentColor;">Число3</div>
<div class="a" style="left:416px;top:304px;width:192px;height:20px;background:#fff;border:1px solid #a8a8a8"></div>
<div class="t" style="left:420.00px;top:308.69px;font-size:11px;color:#000;font-weight:normal;-webkit-text-stroke:0.2px currentColor;">A7</div>
<div class="a" style="left:586px;top:304px;width:22px;height:20px;background:#f3f3f3;border:2px solid #bcbcbc"></div>
<svg class="a" style="left:591px;top:308px;" width="11" height="11" viewBox="0 0 11 11"><path d="M5.5 9.2 V2.6 M2.2 5.8 L5.5 2.3 L8.8 5.8" fill="none" stroke="#000" stroke-width="1.7"/><path d="M1.3 10.3 H9.7" stroke="#000" stroke-width="1.3"/></svg>
<div class="t" style="left:617.00px;top:308.69px;font-size:11px;color:#000;font-weight:normal;-webkit-text-stroke:0.2px currentColor;">=</div>
<div class="t" style="left:634.00px;top:308.69px;font-size:11px;color:#000;font-weight:normal;-webkit-text-stroke:0.2px currentColor;">3</div>
<div class="t" style="left:369.40px;top:331.69px;font-size:11px;color:#000;font-weight:normal;-webkit-text-stroke:0.2px currentColor;">Число4</div>
<div class="a" style="left:416px;top:327px;width:192px;height:20px;background:#fff;border:1px solid #a8a8a8"></div>
<div class="t" style="left:420.00px;top:331.69px;font-size:11px;color:#000;font-weight:normal;-webkit-text-stroke:0.2px currentColor;">4</div>
<div class="a" style="left:586px;top:327px;width:22px;height:20px;background:#f3f3f3;border:2px solid #bcbcbc"></div>
<svg class="a" style="left:591px;top:331px;" width="11" height="11" viewBox="0 0 11 11"><path d="M5.5 9.2 V2.6 M2.2 5.8 L5.5 2.3 L8.8 5.8" fill="none" stroke="#000" stroke-width="1.7"/><path d="M1.3 10.3 H9.7" stroke="#000" stroke-width="1.3"/></svg>
<div class="t" style="left:617.00px;top:331.69px;font-size:11px;color:#000;font-weight:normal;-webkit-text-stroke:0.2px currentColor;">=</div>
<div class="t" style="left:634.00px;top:331.69px;font-size:11px;color:#000;font-weight:normal;-webkit-text-stroke:0.2px currentColor;">4</div>
<div class="t" style="left:369.40px;top:354.69px;font-size:11px;color:#000;font-weight:normal;-webkit-text-stroke:0.2px currentColor;">Число5</div>
<div class="a" style="left:416px;top:350px;width:192px;height:20px;background:#fff;border:1px solid #a8a8a8"></div>
<div class="t" style="left:420.00px;top:354.69px;font-size:11px;color:#000;font-weight:normal;-webkit-text-stroke:0.2px currentColor;">A9</div>
<div class="a" style="left:586px;top:350px;width:22px;height:20px;background:#f3f3f3;border:2px solid #bcbcbc"></div>
<svg class="a" style="left:591px;top:354px;" width="11" height="11" viewBox="0 0 11 11"><path d="M5.5 9.2 V2.6 M2.2 5.8 L5.5 2.3 L8.8 5.8" fill="none" stroke="#000" stroke-width="1.7"/><path d="M1.3 10.3 H9.7" stroke="#000" stroke-width="1.3"/></svg>
<div class="t" style="left:617.00px;top:354.69px;font-size:11px;color:#000;font-weight:normal;-webkit-text-stroke:0.2px currentColor;">=</div>
<div class="t" style="left:634.00px;top:354.69px;font-size:11px;color:#000;font-weight:normal;-webkit-text-stroke:0.2px currentColor;">5</div>
<div class="a" style="left:835px;top:258px;width:1px;height:112px;background:#fff"></div>
<svg class="a" style="left:839px;top:263px;" width="9" height="6" viewBox="0 0 9 6"><path d="M1 5 L4.5 1.5 L8 5" fill="none" stroke="#555" stroke-width="1.6"/></svg>
<div class="a" style="left:836px;top:275px;width:16px;height:17px;background:#cdcdcd"></div>
<svg class="a" style="left:839px;top:358px;" width="9" height="6" viewBox="0 0 9 6"><path d="M1 1 L4.5 4.5 L8 1" fill="none" stroke="#555" stroke-width="1.6"/></svg>
<div class="a" style="left:355px;top:254px;width:314px;height:121px;border:3.5px solid #f00;border-radius:6px"></div>
<div class="t" style="left:617.00px;top:382.49px;font-size:11px;color:#000;font-weight:normal;-webkit-text-stroke:0.2px currentColor;">=</div>
<div class="t" style="left:634.50px;top:382.49px;font-size:11px;color:#000;font-weight:normal;-webkit-text-stroke:0.2px currentColor;">120</div>
<div class="t" style="left:305.20px;top:397.89px;font-size:11px;color:#000;font-weight:normal;letter-spacing:0.297px;-webkit-text-stroke:0.2px currentColor;">Возвращает произведение аргументов.</div>
<div class="t" style="left:461.00px;top:421.93px;font-size:10.6px;color:#000;font-weight:bold;">Число5:</div>
<div class="t" style="left:513.40px;top:421.29px;font-size:11px;color:#000;font-weight:normal;letter-spacing:0.261px;-webkit-text-stroke:0.2px currentColor;">число1;число2;... от 1 до 255 перемножаемых чисел, логических</div>
<div class="t" style="left:513.40px;top:434.29px;font-size:11px;color:#000;font-weight:normal;letter-spacing:0.248px;-webkit-text-stroke:0.2px currentColor;">значений или чисел, представленных в текстовом виде.</div>
<div class="a" style="left:306px;top:470px;width:555px;height:1px;background:#dcdcdc"></div>
<div class="t" style="left:305.20px;top:484.69px;font-size:11px;color:#000;font-weight:normal;letter-spacing:0.419px;-webkit-text-stroke:0.2px currentColor;">Значение:</div>
<div class="t" style="left:370.00px;top:484.79px;font-size:11px;color:#000;font-weight:normal;-webkit-text-stroke:0.2px currentColor;">120</div>
<div class="t" style="left:305.50px;top:514.49px;font-size:11px;color:#0066cc;font-weight:normal;letter-spacing:0.452px;-webkit-text-stroke:0.2px currentColor;text-decoration:underline">Справка по этой функции</div>
<div class="a" style="left:703px;top:507px;width:74px;height:22px;background:#e1e1e1;border:2px solid #0078d7"></div>
<div class="t" style="left:731.00px;top:513.27px;font-size:11.5px;color:#000;font-weight:normal;-webkit-text-stroke:0.2px currentColor;">ОК</div>
<div class="a" style="left:787px;top:507px;width:74px;height:22px;background:#e1e1e1;border:1px solid #adadad"></div>
<div class="t" style="left:802.50px;top:513.27px;font-size:11.5px;color:#000;font-weight:normal;-webkit-text-stroke:0.2px currentColor;">Отмена</div>
<svg class="a" style="left:645px;top:500px;" width="80" height="35" viewBox="0 0 80 35"><rect x="4" y="15" width="52" height="4" fill="#f00"/><path d="M70.5 17 Q60 11.5 50 5.3 Q54 11 54 17 Q54 23 50 28.7 Q60 22.5 70.5 17 Z" fill="#f00"/></svg>
<div class="a" style="left:0px;top:0px;width:1px;height:611px;background:#007541"></div>
<div class="a" style="left:913px;top:62px;width:1px;height:549px;background:#007541"></div>
<div class="a" style="left:0px;top:610px;width:914px;height:1px;background:#007541"></div>
</body></html>
